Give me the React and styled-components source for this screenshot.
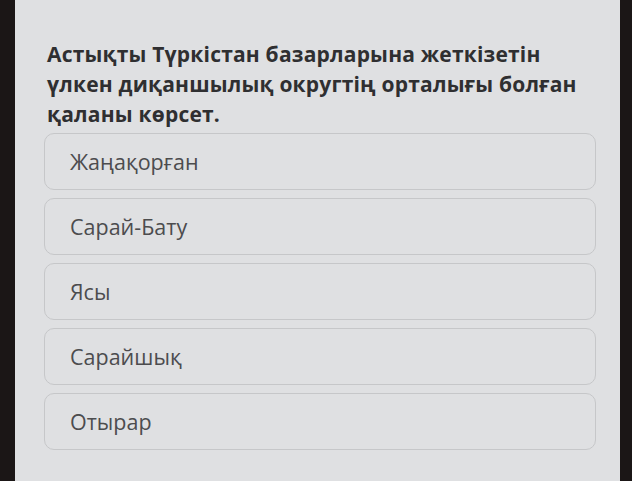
import styled, { createGlobalStyle } from "styled-components"

const GlobalStyle = createGlobalStyle`
  html, body {
    margin: 0;
    padding: 0;
    background: #1b1616;
  }
  #root {
    height: 481px;
  }
`

const Frame = styled.div`
  display: flex;
  height: 481px;
  width: 632px;
  overflow: hidden;
`

const Bezel = styled.div`
  flex: 0 0 ${(p) => p.width}px;
  background: #1b1616;
`

const Screen = styled.div`
  flex: 1;
  background: #dfe0e2;
  padding: 39px 0 0 32px;
  font-family: "Open Sans", "Noto Sans", sans-serif;
  box-sizing: border-box;
`

const Question = styled.h2`
  margin: 0;
  font-size: 21px;
  font-weight: 700;
  line-height: 30px;
  color: #2f2f31;
  white-space: nowrap;
  letter-spacing: 0.2px;
`

const Options = styled.div`
  display: flex;
  flex-direction: column;
  gap: 8px;
  margin: 4px 0 0 -3px;
  width: 552px;
`

const Option = styled.div`
  height: 57px;
  box-sizing: border-box;
  border: 1.5px solid #c6c7c9;
  border-radius: 10px;
  display: flex;
  align-items: center;
  padding-left: 25px;
  font-size: 21.5px;
  color: #4c4c4e;
`

const answers = ["Жаңақорған", "Сарай-Бату", "Ясы", "Сарайшық", "Отырар"]

export default function App() {
  return (
    <>
      <GlobalStyle />
      <Frame>
        <Bezel width={15} />
        <Screen>
          <Question>
            Астықты Түркістан базарларына жеткізетін
            <br />
            үлкен диқаншылық округтің орталығы болған
            <br />
            қаланы көрсет.
          </Question>
          <Options>
            {answers.map((a) => (
              <Option key={a}>{a}</Option>
            ))}
          </Options>
        </Screen>
        <Bezel width={12} />
      </Frame>
    </>
  )
}
